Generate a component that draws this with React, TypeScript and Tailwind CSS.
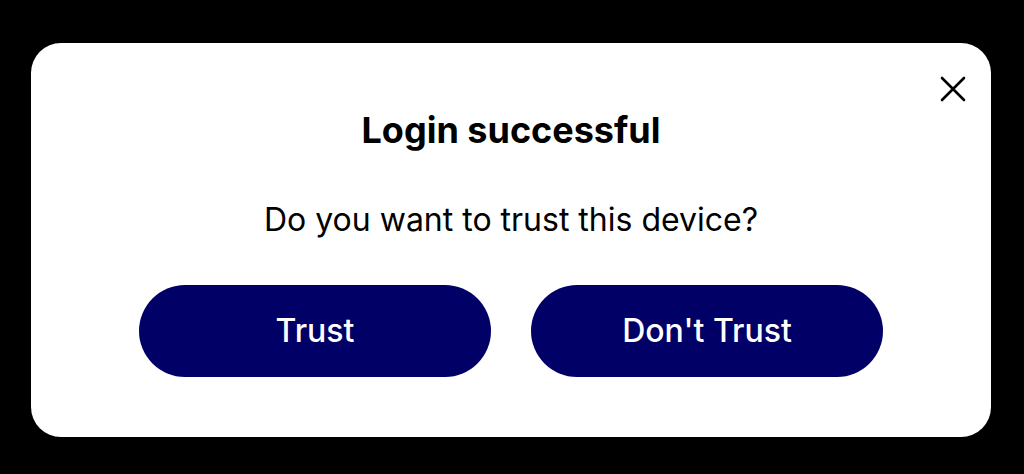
import React from 'react';

export default function App() {
  return (
    <div className="w-full h-[474px] bg-black pt-[43px] pl-[31px]" style={{ fontFamily: 'Inter, "Noto Sans", sans-serif' }}>
      <div className="relative w-[960px] h-[394px] bg-white rounded-[30px] flex flex-col items-center">
        <button className="absolute top-[31px] right-[23px] w-[30px] h-[30px] flex items-center justify-center text-black">
          <svg width="26" height="26" viewBox="0 0 26 26" fill="none" stroke="currentColor" strokeWidth="2.6" strokeLinecap="round">
            <path d="M2 2 L24 24 M24 2 L2 24" />
          </svg>
        </button>
        <h1 className="mt-[65px] text-[36px] leading-[44px] font-bold text-black">Login successful</h1>
        <p className="mt-[48px] text-[32px] leading-[40px] text-black">Do you want to trust this device?</p>
        <div className="mt-[45px] flex gap-[40px]">
          <button className="w-[352px] h-[92px] rounded-full bg-[#000066] text-white text-[32px] font-medium">Trust</button>
          <button className="w-[352px] h-[92px] rounded-full bg-[#000066] text-white text-[32px] font-medium">Don't Trust</button>
        </div>
      </div>
    </div>
  );
}
